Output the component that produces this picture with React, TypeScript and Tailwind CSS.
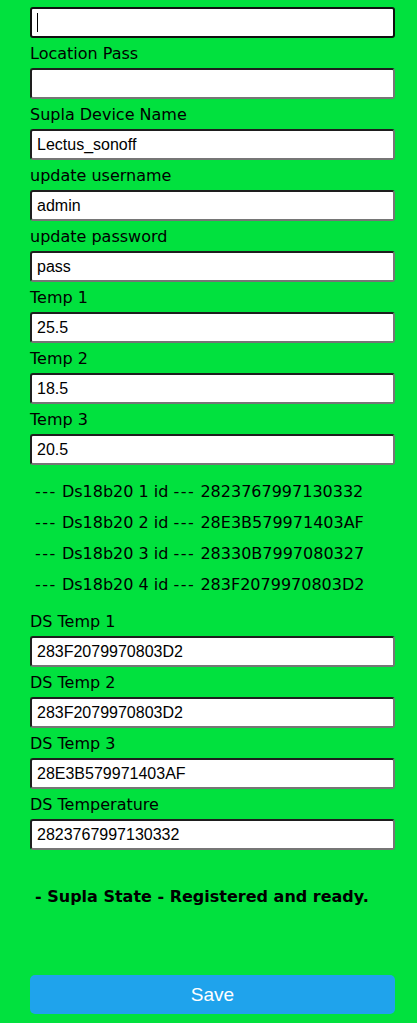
const fields: { label: string; value: string }[] = [
  { label: "Location Pass", value: "" },
  { label: "Supla Device Name", value: "Lectus_sonoff" },
  { label: "update username", value: "admin" },
  { label: "update password", value: "pass" },
  { label: "Temp 1", value: "25.5" },
  { label: "Temp 2", value: "18.5" },
  { label: "Temp 3", value: "20.5" },
];

const sensors = [
  "2823767997130332",
  "28E3B579971403AF",
  "28330B7997080327",
  "283F2079970803D2",
];

const dsFields: { label: string; value: string }[] = [
  { label: "DS Temp 1", value: "283F2079970803D2" },
  { label: "DS Temp 2", value: "283F2079970803D2" },
  { label: "DS Temp 3", value: "28E3B579971403AF" },
  { label: "DS Temperature", value: "2823767997130332" },
];

const inputCls =
  "block w-[365px] h-[31px] px-[5px] bg-white text-black text-[16px] font-['Liberation_Sans',Arial,sans-serif] rounded-[3px] border-2 border-t-[#1e1e1e] border-l-[#1e1e1e] border-r-[#767676] border-b-[#767676] outline-none";

function Field({ label, value, first }: { label: string; value: string; first?: boolean }) {
  return (
    <>
      <div className={(first ? "pt-[12px]" : "pt-[6px]") + " pb-[5px] leading-[19px] text-[16px]"}>{label}</div>
      <input className={inputCls} defaultValue={value} readOnly />
    </>
  );
}

export default function App() {
  return (
    <div className="min-h-[1023px] bg-[#01e13e] text-black font-['DejaVu_Sans',Verdana,sans-serif] pl-[30px] pt-[7px] pb-[8px]">
      <div className="relative w-[365px]">
        <input
          className="block w-[365px] h-[31px] px-[5px] bg-white text-black text-[16px] font-['Liberation_Sans',Arial,sans-serif] rounded-[3px] border-2 border-[#101010] outline-none"
          defaultValue=""
          readOnly
        />
        <span className="absolute left-[7px] top-[6px] w-px h-[19px] bg-black" />
      </div>

      {fields.map((f) => (
        <Field key={f.label} label={f.label} value={f.value} />
      ))}

      <div className="mt-[11px]">
        {sensors.map((id, i) => (
          <div key={id} className="py-[6px] pl-[5px] leading-[19px] text-[16px] whitespace-pre">
            <span className="tracking-[1.5px]">---</span> Ds18b20 {i + 1} id{" "}
            <span className="tracking-[1.5px]">---</span> {id}
          </div>
        ))}
      </div>

      {dsFields.map((f, i) => (
        <Field key={f.label} label={f.label} value={f.value} first={i === 0} />
      ))}

      <div className="mt-[37px] pl-[5px] leading-[19px] text-[16px] font-bold">
        - Supla State - Registered and ready.
      </div>

      <button className="mt-[69px] block w-[365px] h-[39px] leading-[39px] rounded-[5px] bg-[#1fa3ec] text-white text-[19px] font-['Liberation_Sans',Arial,sans-serif]">
        Save
      </button>
    </div>
  );
}
